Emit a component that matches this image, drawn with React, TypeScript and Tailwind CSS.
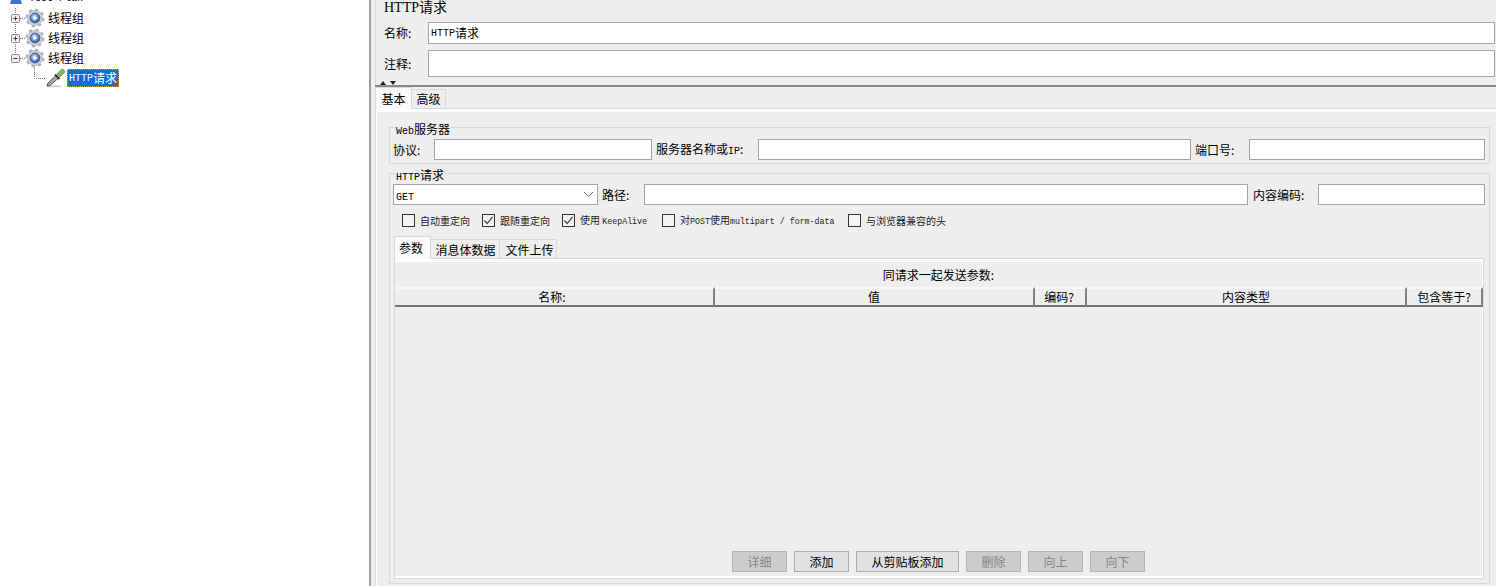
import type { ReactNode } from "react";

const cn = "font-['SimSun','Noto_Sans_CJK_SC',sans-serif]";

// latin text in the swing ui is a narrow mono-ish face
const Lat = ({ children, size = "text-[10px]" }: { children: ReactNode; size?: string }) => (
  <span className={`font-['Liberation_Mono',monospace] ${size}`}>{children}</span>
);

const Gear = () => (
  <svg width="20" height="20" viewBox="0 0 20 20" className="shrink-0">
    <defs>
      <radialGradient id="hub" cx="45%" cy="40%" r="60%">
        <stop offset="0%" stopColor="#ffffff" />
        <stop offset="45%" stopColor="#7fa3d6" />
        <stop offset="100%" stopColor="#1f4f9c" />
      </radialGradient>
    </defs>
    <circle cx="10" cy="10" r="7.8" fill="none" stroke="#b4b4b4" strokeWidth="3.6" strokeDasharray="3 3.12" />
    <circle cx="10" cy="10" r="7.4" fill="#d8d8d8" stroke="#a8a8a8" strokeWidth="0.8" />
    <circle cx="10" cy="10" r="5" fill="url(#hub)" stroke="#2c5596" strokeWidth="0.8" />
    <path d="M8.6 7.8 L12.2 10 L8.6 12.2 Z" fill="#ffffff" />
  </svg>
);

const Pipette = () => (
  <svg width="22" height="20" viewBox="0 0 22 20" className="shrink-0">
    <ellipse cx="9" cy="18.3" rx="8" ry="0.9" fill="#c9c9c9" />
    <path d="M2 18 L3 15 L11 7.5 L13.5 10 L5 17.5 Z" fill="#a8a8a8" stroke="#3c3c3c" strokeWidth="0.8" />
    <path d="M10 6.5 L14.5 11" stroke="#2e2e2e" strokeWidth="2" />
    <path d="M12 6 L16 1.6 Q17.4 0.6 19 1.8 Q20.4 3.4 19.2 4.8 L15 9 Z" fill="#78b85a" stroke="#4f8a3c" strokeWidth="0.6" />
  </svg>
);

const TreeLines = ({ open, last }: { open?: boolean; last?: boolean }) => (
  <svg width="25" height="20" viewBox="0 0 25 20" className="shrink-0">
    <path d={last ? "M15.5 0V10" : "M15.5 0V20"} stroke="#777" strokeDasharray="1 1" />
    <path d="M20 10.5H25" stroke="#777" strokeDasharray="1 1" />
    <rect x="11.5" y="6.5" width="8" height="8" rx="1" fill="#eeeeee" stroke="#8a8a8a" />
    <path d="M13.5 10.5H17.5" stroke="#2a3f6a" />
    {!open && <path d="M15.5 8.5V12.5" stroke="#2a3f6a" />}
  </svg>
);

const ThreadGroup = ({ open, last }: { open?: boolean; last?: boolean }) => (
  <div className="flex h-5 items-center">
    <TreeLines open={open} last={last} />
    <Gear />
    <span className={`ml-[3px] text-[12px] text-black ${cn}`}>线程组</span>
  </div>
);

const Tree = () => (
  <div className="h-full w-[371px] shrink-0 overflow-hidden border-r-2 border-[#9e9e9e] bg-white">
    <div className="mt-[-12px] flex h-5 items-center pl-[8px]">
      <svg width="16" height="16" viewBox="0 0 16 16" className="shrink-0">
        <path d="M8 1 Q11 1 12 7 L14 14 H2 L4 7 Q5 1 8 1 Z" fill="#3b6fd0" />
      </svg>
      <span className="ml-[5px] font-['Liberation_Mono',monospace] text-[10px] text-black">Test Plan</span>
    </div>
    <ThreadGroup />
    <ThreadGroup />
    <ThreadGroup open last />
    <div className="flex h-5 items-center">
      <svg width="45" height="20" viewBox="0 0 45 20" className="shrink-0">
        <path d="M34.5 0V10.5H45" stroke="#777" fill="none" strokeDasharray="1 1" />
      </svg>
      <Pipette />
      <div className={`flex h-[18px] w-[52px] items-center border border-dotted border-[#e8a33d] bg-[#0a6fd0] pl-[1px] text-[12px] text-white ${cn}`}>
        <Lat>HTTP</Lat>请求
      </div>
    </div>
  </div>
);

const Box = ({ className = "", children }: { className?: string; children?: ReactNode }) => (
  <div className={`flex shrink-0 items-center border border-[#a5a5a5] bg-white pl-[2px] text-[12px] text-black ${cn} ${className}`}>
    {children}
  </div>
);

const Label = ({ className = "", children }: { className?: string; children: ReactNode }) => (
  <span className={`shrink-0 text-[12px] text-black ${cn} ${className}`}>{children}</span>
);

const Legend = ({ children }: { children: ReactNode }) => (
  <span className={`absolute left-[5px] top-[-6px] bg-[#eeeeee] px-[1px] text-[12px] leading-[13px] text-black ${cn}`}>
    {children}
  </span>
);

const Check = ({ on, className = "", children }: { on?: boolean; className?: string; children: ReactNode }) => (
  <div className={`flex h-[13px] shrink-0 items-center ${className}`}>
    <div className="flex h-[13px] w-[13px] items-center justify-center border border-[#333333] bg-[#f4f4f4]">
      {on && (
        <svg width="11" height="11" viewBox="0 0 11 11">
          <path d="M1.5 5.5 L4.2 8.5 L9.5 1.8" fill="none" stroke="#444444" strokeWidth="1.2" />
        </svg>
      )}
    </div>
    <span className={`ml-[5px] whitespace-nowrap text-[10px] text-[#222222] ${cn}`}>{children}</span>
  </div>
);

const Th = ({ className = "", children }: { className?: string; children: ReactNode }) => (
  <div className={`flex h-full shrink-0 items-center justify-center border-t-2 border-r-2 border-b-2 border-t-[#f8f8f8] border-r-[#808080] border-b-[#757575] text-[12px] text-black ${cn} ${className}`}>
    {children}
  </div>
);

const Btn = ({ off, className = "", children }: { off?: boolean; className?: string; children: ReactNode }) => (
  <div
    className={`flex h-[21px] items-center justify-center border text-[12px] ${cn} ${className} ${
      off ? "border-[#b5b5b5] bg-[#cccccc] text-[#858585]" : "border-[#adadad] bg-[#e1e1e1] text-black"
    }`}
  >
    {children}
  </div>
);

const WebPanel = () => (
  <div className="relative ml-[12px] mt-[15px] h-[37px] w-[1101px] border border-[#d9d9d9] pl-[3px]">
    <Legend>
      <Lat>Web</Lat>服务器
    </Legend>
    <div className="mt-[11px] flex items-center">
      <Label className="w-[41px]">协议:</Label>
      <Box className="h-[21px] w-[218px]" />
      <Label className="ml-[4px] w-[102px]">
        服务器名称或<Lat>IP</Lat>:
      </Label>
      <Box className="h-[21px] w-[433px]" />
      <Label className="ml-[4px] w-[54px]">端口号:</Label>
      <Box className="h-[21px] w-[236px]" />
    </div>
  </div>
);

const ParamTabs = () => (
  <>
    <div className="ml-[1px] mt-[10px] flex h-[21px] items-end">
      <div className={`z-10 mb-[-1px] flex h-[23px] w-[37px] items-center justify-center border border-b-0 border-[#d9d9d9] bg-[#fafafa] pr-[3px] text-[12px] text-black ${cn}`}>
        参数
      </div>
      <div className={`flex h-[19px] w-[69px] items-center justify-center border-t border-r border-[#d9d9d9] bg-[#eeeeee] pt-[1px] pl-[1px] text-[12px] text-black ${cn}`}>
        消息体数据
      </div>
      <div className={`flex h-[19px] w-[57px] items-center justify-center border-t border-r border-[#d9d9d9] bg-[#eeeeee] pt-[1px] pl-[3px] text-[12px] text-black ${cn}`}>
        文件上传
      </div>
    </div>
    <div className="ml-[1px] h-[321px] w-[1090px] border border-[#d9d9d9]">
      <div className="flex h-full flex-col border-r border-b-2 border-t-[3px] border-white bg-[#eeeeee]">
        <div className={`h-[25px] pt-[5px] text-center text-[12px] leading-[16px] text-black ${cn}`}>同请求一起发送参数:</div>
        <div className="flex h-[20px]">
          <Th className="w-[320px] pr-[4px]">名称:</Th>
          <Th className="w-[320px]">值</Th>
          <Th className="w-[52px] pr-[2px]">编码?</Th>
          <Th className="w-[320px]">内容类型</Th>
          <Th className="w-[76px]">包含等于?</Th>
        </div>
        <div className="flex-1" />
        <div className="mb-[4px] flex justify-center gap-[7px]">
          <Btn off className="w-[55px]">详细</Btn>
          <Btn className="w-[55px]">添加</Btn>
          <Btn className="w-[103px]">从剪贴板添加</Btn>
          <Btn off className="w-[55px]">删除</Btn>
          <Btn off className="w-[55px]">向上</Btn>
          <Btn off className="w-[55px]">向下</Btn>
        </div>
      </div>
    </div>
  </>
);

const HttpPanel = () => (
  <div className="relative ml-[12px] mt-[9px] h-[411px] w-[1101px] border border-[#d9d9d9] pl-[3px]">
    <Legend>
      <Lat>HTTP</Lat>请求
    </Legend>
    <div className="mt-[10px] flex items-center">
      <Box className="h-[21px] w-[205px] justify-between pr-[3px]">
        <span className="pt-[1px]"><Lat>GET</Lat></span>
        <svg width="11" height="7" viewBox="0 0 11 7">
          <path d="M1 1 L5.5 5.5 L10 1" fill="none" stroke="#666666" />
        </svg>
      </Box>
      <Label className="ml-[4px] w-[42px]">路径:</Label>
      <Box className="h-[21px] w-[604px]" />
      <Label className="ml-[5px] w-[65px]">内容编码:</Label>
      <Box className="h-[21px] w-[167px]" />
    </div>
    <div className="ml-[9px] mt-[9px] flex">
      <Check className="w-[80px]">自动重定向</Check>
      <Check on className="w-[80px]">跟随重定向</Check>
      <Check on className="w-[100px]">
        使用 <Lat size="text-[8.3px]">KeepAlive</Lat>
      </Check>
      <Check className="w-[186px]">
        对<Lat size="text-[8.3px]">POST</Lat>使用<Lat size="text-[8.3px]">multipart / form-data</Lat>
      </Check>
      <Check>与浏览器兼容的头</Check>
    </div>
    <ParamTabs />
  </div>
);

const Editor = () => (
  <div className="ml-[4px] flex h-full min-w-0 flex-1 flex-col">
    <div className="h-[85px] shrink-0 border-l border-[#d9d9d9] pl-[8px]">
      <div className={`mt-[-3px] h-[25px] text-[14px] leading-[18px] text-black ${cn}`}>
        <span className="font-['Liberation_Serif',serif]">HTTP</span>请求
      </div>
      <div className="flex items-center">
        <Label className="w-[44px]">名称:</Label>
        <Box className="h-[22px] w-[1067px]">
          <Lat>HTTP</Lat>请求
        </Box>
      </div>
      <div className="mt-[6px] flex items-center">
        <Label className="w-[44px]">注释:</Label>
        <Box className="h-[27px] w-[1067px]" />
      </div>
      <svg width="20" height="6" viewBox="0 0 20 6" className="ml-[-7px] mt-[3px] block">
        <path d="M3 5 L6 1 L9 5 Z M13 1 H19 L16 5 Z" fill="#222222" />
      </svg>
    </div>
    <div className="flex h-[2px] shrink-0 items-center bg-[#8a8a8a]" />
    <div className="flex h-[21px] shrink-0 items-end">
      <div className={`z-10 mb-[-1px] flex h-[22px] w-[37px] items-center justify-center border border-b-0 border-[#d9d9d9] bg-[#fafafa] text-[12px] text-black ${cn}`}>
        基本
      </div>
      <div className={`flex h-[19px] w-[34px] items-center justify-center border-t border-r border-[#d9d9d9] text-[12px] text-black ${cn}`}>
        高级
      </div>
    </div>
    <div className="min-h-0 flex-1 border-t border-l border-[#d9d9d9]">
      <div className="h-full border-t-[3px] border-l border-white">
        <WebPanel />
        <HttpPanel />
      </div>
    </div>
  </div>
);

export default function App() {
  return (
    <div className="flex h-[586px] w-[1496px] overflow-hidden bg-[#eeeeee]">
      <Tree />
      <Editor />
    </div>
  );
}
